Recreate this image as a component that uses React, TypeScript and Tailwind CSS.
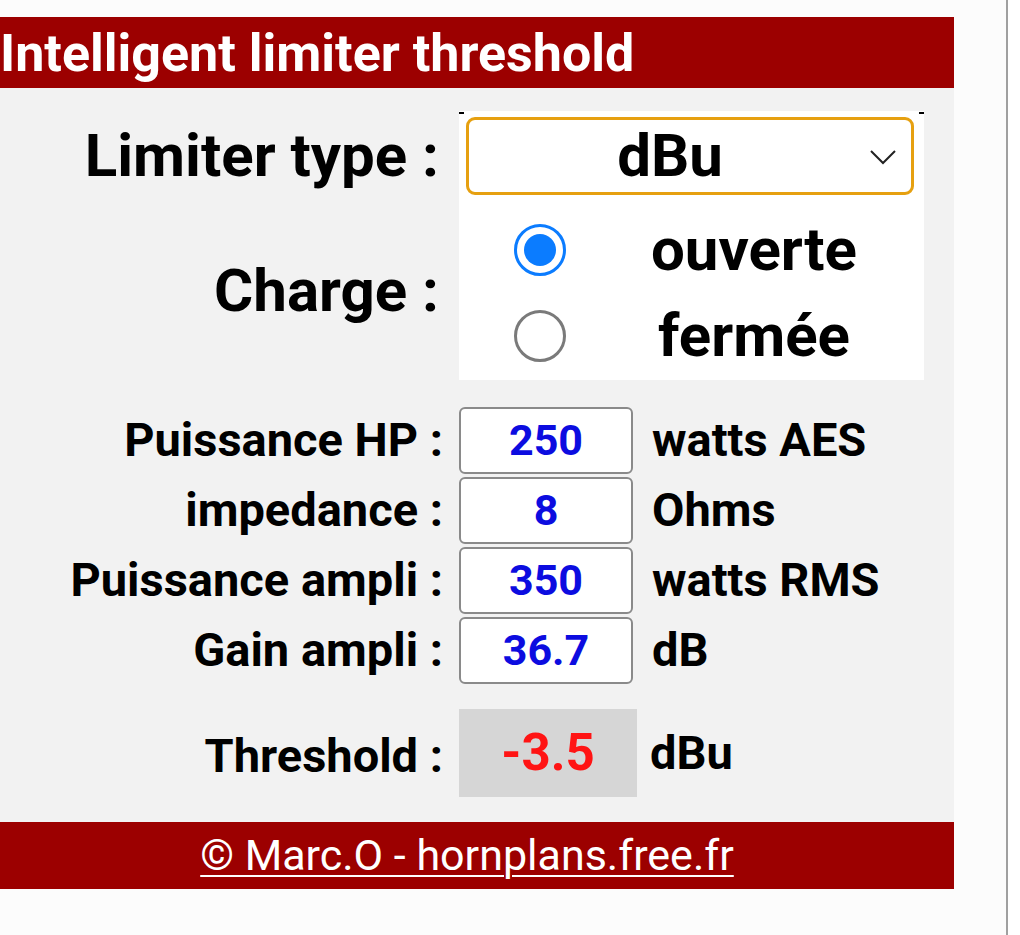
import React from "react";

const rows = [
  { label: "Puissance HP :", value: "250", unit: "watts AES" },
  { label: "impedance :", value: "8", unit: "Ohms" },
  { label: "Puissance ampli :", value: "350", unit: "watts RMS" },
  { label: "Gain ampli :", value: "36.7", unit: "dB" },
];

function Radio({ checked }: { checked: boolean }) {
  return checked ? (
    <span className="flex h-[52px] w-[52px] items-center justify-center rounded-full border-[3px] border-[#0b7cff]">
      <span className="h-[32px] w-[32px] rounded-full bg-[#0b7cff]" />
    </span>
  ) : (
    <span className="block h-[52px] w-[52px] rounded-full border-[3px] border-[#7a7a7a]" />
  );
}

export default function App() {
  return (
    <div className="h-[935px] w-[1020px] overflow-hidden bg-white font-['Roboto','Noto_Sans',sans-serif]">
      <div className="h-full w-[1008px] border-r-2 border-[#a0a0a0] bg-[#fcfcfc] pt-[17px]">
        <div className="w-[954px]">
          {/* Header */}
          <div className="h-[71px] bg-[#9c0000] pt-[2px] text-[52px] font-bold leading-[69px] text-white">
            Intelligent limiter threshold
          </div>

          {/* Body */}
          <div className="bg-[#f2f2f2] pb-[25px] pt-[23px] font-bold text-black">
            {/* Limiter type + charge */}
            <div className="flex">
              <div className="flex w-[459px] flex-col items-end pr-[20px] text-[60px]">
                <div className="flex h-[90px] items-center">Limiter type :</div>
                <div className="flex h-[179px] items-center">Charge :</div>
              </div>
              <div className="relative w-[465px] bg-white px-[7px] pt-[6px]">
                <span className="absolute left-0 top-[1px] h-[2px] w-[5px] bg-black" />
                <span className="absolute right-0 top-[1px] h-[2px] w-[5px] bg-black" />
                <div className="relative flex h-[78px] w-[448px] items-center rounded-[9px] border-[3px] border-[#e6a010] pr-[40px]">
                  <span className="flex-1 text-center text-[60px] leading-none">dBu</span>
                  <svg
                    className="absolute right-[14px] top-[29px]"
                    width="28"
                    height="16"
                    viewBox="0 0 28 16"
                    fill="none"
                    stroke="#222"
                    strokeWidth={2}
                  >
                    <path d="M2 2l12 12L26 2" />
                  </svg>
                </div>
                <div className="flex h-[90px] items-center pt-[20px]">
                  <div className="flex w-[148px] justify-center">
                    <Radio checked />
                  </div>
                  <span className="w-[280px] text-center text-[60px]">ouverte</span>
                </div>
                <div className="flex h-[89px] items-center pt-[12px]">
                  <div className="flex w-[148px] justify-center">
                    <Radio checked={false} />
                  </div>
                  <span className="w-[280px] text-center text-[60px]">fermée</span>
                </div>
              </div>
            </div>

            {/* Numeric inputs */}
            <div className="mt-[27px] flex flex-col gap-[3px]">
              {rows.map((r) => (
                <div key={r.label} className="flex h-[67px] items-center text-[47px]">
                  <div className="w-[459px] pr-[16px] text-right">{r.label}</div>
                  <div className="flex h-[67px] w-[174px] items-center justify-center rounded-[6px] border-2 border-[#8a8a8a] bg-white text-[43px] text-[#0c0ce0]">
                    {r.value}
                  </div>
                  <div className="pl-[19px]">{r.unit}</div>
                </div>
              ))}
            </div>

            {/* Threshold */}
            <div className="mt-[25px] flex h-[88px] items-center text-[47px]">
              <div className="w-[459px] pr-[16px] pt-[6px] text-right">Threshold :</div>
              <div className="flex h-[88px] w-[178px] items-center justify-center bg-[#d6d6d6] text-[51px] text-[#ff1414]">
                -3.5
              </div>
              <div className="pl-[13px]">dBu</div>
            </div>
          </div>

          {/* Footer */}
          <div className="flex h-[67px] items-center justify-center bg-[#9c0000] text-[43px] text-white">
            <span className="pr-[20px] underline decoration-2 underline-offset-[5px]">© Marc.O - hornplans.free.fr</span>
          </div>
        </div>
      </div>
    </div>
  );
}
